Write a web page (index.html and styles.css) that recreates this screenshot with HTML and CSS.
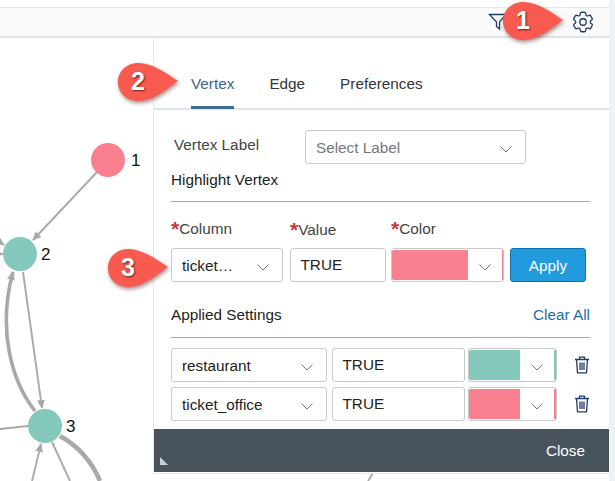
FILE: index.html
```html
<!DOCTYPE html>
<html lang="en">
<head>
    <meta charset="UTF-8">
    <title>Graph Settings</title>
    <link rel="stylesheet" href="styles.css">
</head>
<body>
    <svg class="graph" width="615" height="481" viewBox="0 0 615 481">
        <defs>
            <marker id="arrow" markerWidth="9" markerHeight="9" refX="8" refY="4.5" orient="auto" markerUnits="userSpaceOnUse">
                <path d="M0 0.5 L9 4.5 L0 8.5 Z" fill="#a9a9a9"/>
            </marker>
        </defs>
        <g fill="none" stroke="#a9a9a9" stroke-width="1.9">
            <path d="M97 172 L33 240" marker-end="url(#arrow)"/>
            <path d="M-6 238 L4 245" marker-end="url(#arrow)"/>
            <path d="M-8 254 L3 254" marker-end="url(#arrow)"/>
            <path d="M23 272 L42 408" marker-end="url(#arrow)"/>
            <path d="M0 429 L28 426"/>
            <path d="M32 481 L41 444" marker-end="url(#arrow)"/>
            <path d="M52 442 L70 481"/>
            <path d="M373 473 L368 481"/>
            <path d="M35 411 C12 382 -3 330 13 272" stroke-width="3.6" marker-end="url(#arrow)"/>
            <path d="M60 436 C78 446 92 462 100 481" stroke-width="4.6"/>
        </g>
        <circle cx="108" cy="160" r="17" fill="#f9808f"/>
        <circle cx="20" cy="254" r="17" fill="#83c8ba"/>
        <circle cx="45" cy="426" r="17" fill="#83c8ba"/>
        <text x="131" y="166" class="node-label">1</text>
        <text x="41" y="260" class="node-label">2</text>
        <text x="66" y="432" class="node-label">3</text>
    </svg>

    <header class="toolbar">
        <svg class="filter-icon" width="20" height="20" viewBox="0 0 20 20" fill="none" stroke="#223a66" stroke-width="1.3">
            <path d="M1.5 2.5 H18 L11.5 10 V17 L8.5 14.5 V10 Z"/>
        </svg>
        <svg class="gear-icon" width="26" height="26" viewBox="0 0 24 24" fill="none" stroke="#223a66" stroke-width="1.2">
            <path d="M9.594 3.94c.09-.542.56-.94 1.11-.94h2.593c.55 0 1.02.398 1.11.94l.213 1.281c.063.374.313.686.645.87.074.04.147.083.22.127.325.196.72.257 1.075.124l1.217-.456a1.125 1.125 0 0 1 1.37.49l1.296 2.247a1.125 1.125 0 0 1-.26 1.431l-1.003.827c-.293.241-.438.613-.43.992a7.723 7.723 0 0 1 0 .255c-.008.378.137.75.43.991l1.004.827c.424.35.534.955.26 1.43l-1.298 2.247a1.125 1.125 0 0 1-1.369.491l-1.217-.456c-.355-.133-.75-.072-1.076.124a6.47 6.47 0 0 1-.22.128c-.331.183-.581.495-.644.869l-.213 1.281c-.09.543-.56.94-1.11.94h-2.594c-.55 0-1.019-.398-1.11-.94l-.213-1.281c-.062-.374-.312-.686-.644-.87a6.52 6.52 0 0 1-.22-.127c-.325-.196-.72-.257-1.076-.124l-1.217.456a1.125 1.125 0 0 1-1.369-.49l-1.297-2.247a1.125 1.125 0 0 1 .26-1.431l1.004-.827c.292-.24.437-.613.43-.991a6.932 6.932 0 0 1 0-.255c.007-.38-.138-.751-.43-.992l-1.004-.827a1.125 1.125 0 0 1-.26-1.43l1.297-2.247a1.125 1.125 0 0 1 1.37-.491l1.216.456c.356.133.751.072 1.076-.124.072-.044.146-.086.22-.128.332-.183.582-.495.644-.869l.214-1.28Z"/>
            <circle cx="12" cy="12" r="3"/>
        </svg>
    </header>

    <section class="panel">
        <nav class="tabs">
            <a class="tab active">Vertex</a>
            <a class="tab">Edge</a>
            <a class="tab">Preferences</a>
        </nav>

        <div class="panel-body">
            <div class="label-row">
                <span class="muted-label">Vertex Label</span>
                <div class="select select-label">
                    <span class="placeholder">Select Label</span>
                    <svg class="chevron" width="12" height="7" viewBox="0 0 12 7"><path d="M0.5 0.5 L6 6 L11.5 0.5"/></svg>
                </div>
            </div>

            <div class="section-title">Highlight Vertex</div>
            <hr class="rule">

            <div class="field-labels">
                <label class="w-column"><b>*</b>Column</label>
                <label class="w-value value-label"><b>*</b>Value</label>
                <label class="w-color"><b>*</b>Color</label>
            </div>
            <div class="field-row">
                <div class="select w-column">
                    <span>ticket…</span>
                    <svg class="chevron" width="12" height="7" viewBox="0 0 12 7"><path d="M0.5 0.5 L6 6 L11.5 0.5"/></svg>
                </div>
                <div class="input w-value">TRUE</div>
                <div class="color-select w-color pink">
                    <span class="swatch"></span>
                    <svg class="chevron" width="12" height="7" viewBox="0 0 12 7"><path d="M0.5 0.5 L6 6 L11.5 0.5"/></svg>
                </div>
                <button class="apply">Apply</button>
            </div>

            <div class="applied-head">
                <span class="section-title">Applied Settings</span>
                <a class="clear-all">Clear All</a>
            </div>
            <hr class="rule rule-applied">

            <div class="applied-row">
                <div class="select w-name">
                    <span>restaurant</span>
                    <svg class="chevron" width="12" height="7" viewBox="0 0 12 7"><path d="M0.5 0.5 L6 6 L11.5 0.5"/></svg>
                </div>
                <div class="input w-val2">TRUE</div>
                <div class="color-select w-col2 teal">
                    <span class="swatch"></span>
                    <svg class="chevron" width="12" height="7" viewBox="0 0 12 7"><path d="M0.5 0.5 L6 6 L11.5 0.5"/></svg>
                </div>
                <svg class="trash" width="16" height="18" viewBox="0 0 16 18" fill="none" stroke="#223a66" stroke-width="1.3">
                    <path d="M1 3.5 H15 M5.5 3 V1.2 H10.5 V3 M2.5 3.5 L3.5 16.8 H12.5 L13.5 3.5 M6 6.5 V14 M8 6.5 V14 M10 6.5 V14"/>
                </svg>
            </div>
            <div class="applied-row">
                <div class="select w-name">
                    <span>ticket_office</span>
                    <svg class="chevron" width="12" height="7" viewBox="0 0 12 7"><path d="M0.5 0.5 L6 6 L11.5 0.5"/></svg>
                </div>
                <div class="input w-val2">TRUE</div>
                <div class="color-select w-col2 pink">
                    <span class="swatch"></span>
                    <svg class="chevron" width="12" height="7" viewBox="0 0 12 7"><path d="M0.5 0.5 L6 6 L11.5 0.5"/></svg>
                </div>
                <svg class="trash" width="16" height="18" viewBox="0 0 16 18" fill="none" stroke="#223a66" stroke-width="1.3">
                    <path d="M1 3.5 H15 M5.5 3 V1.2 H10.5 V3 M2.5 3.5 L3.5 16.8 H12.5 L13.5 3.5 M6 6.5 V14 M8 6.5 V14 M10 6.5 V14"/>
                </svg>
            </div>
        </div>

        <footer class="panel-footer">
            <svg class="grip" width="10" height="10" viewBox="0 0 10 10"><path d="M1 1 L9 9 H1 Z" fill="#c9ced3"/></svg>
            <span class="close">Close</span>
        </footer>
    </section>

    <div class="callout callout-1">
        <svg width="66" height="46" viewBox="0 0 66 46"><path d="M22 2 C36 2 50 12 62 20 C50 28 38 40 22 40 C10 40 2 31 2 21 C2 11 10 2 22 2 Z"/></svg>
        <span>1</span>
    </div>
    <div class="callout callout-2">
        <svg width="66" height="46" viewBox="0 0 66 46"><path d="M22 2 C36 2 50 12 62 20 C50 28 38 40 22 40 C10 40 2 31 2 21 C2 11 10 2 22 2 Z"/></svg>
        <span>2</span>
    </div>
    <div class="callout callout-3">
        <svg width="66" height="46" viewBox="0 0 66 46"><path d="M22 2 C36 2 50 12 62 20 C50 28 38 40 22 40 C10 40 2 31 2 21 C2 11 10 2 22 2 Z"/></svg>
        <span>3</span>
    </div>
</body>
</html>
```

FILE: styles.css
```css
* {
    box-sizing: border-box;
}
body {
    margin: 0;
    width: 615px;
    height: 481px;
    overflow: hidden;
    position: relative;
    background-color: #ffffff;
    font-family: "Liberation Sans", Arial, sans-serif;
    font-size: 15.3px;
    color: #32363a;
    padding-top: 7px;
    border-right: 6px solid #eef1f6;
}

/* free canvas behind everything */
.graph {
    position: absolute;
    left: 0;
    top: 0;
}
.node-label {
    font-family: "Liberation Sans", Arial, sans-serif;
    font-size: 17px;
    fill: #111111;
}

.toolbar {
    position: relative;
    height: 31px;
    background-color: #fafafa;
    border-top: 1px solid #e4e9f0;
    border-bottom: 2px solid #dde3ea;
    display: flex;
    align-items: center;
    justify-content: flex-end;
    gap: 62px;
    padding-right: 13px;
}

.panel {
    position: relative;
    margin-left: 153px;
    height: 436px;
    background-color: #ffffff;
    border-left: 1px solid #e4e9f4;
    border-bottom: 1px solid #e4e9f0;
    display: flex;
    flex-direction: column;
}
.tabs {
    height: 72px;
    display: flex;
    gap: 35px;
    padding-left: 37px;
    border-bottom: 2px solid #d9e6f2;
}
.tab {
    height: 71px;
    padding-top: 37px;
    color: #32363a;
}
.tab.active {
    color: #3f6388;
    border-bottom: 3px solid #3f6a94;
}

.panel-body {
    flex: 1;
    padding: 20px 19px 0 17px;
}
.label-row {
    display: flex;
    align-items: center;
    height: 34px;
}
.muted-label {
    width: 134px;
    padding-left: 3px;
    padding-bottom: 4px;
    color: #444444;
}
.select, .input, .color-select {
    height: 34px;
    background-color: #ffffff;
    border: 1px solid #c9c9c9;
    border-radius: 3px;
    display: flex;
    align-items: center;
    color: #222222;
}
.select {
    justify-content: space-between;
    padding: 0 13px 0 10px;
}
.select span {
    padding-top: 1px;
}
.select-label {
    width: 221px;
}
.placeholder {
    color: #74777a;
}
.chevron {
    fill: none;
    stroke: #6a7a8a;
    stroke-width: 1;
    flex: none;
    margin-top: 4px;
}
.section-title {
    color: #222222;
}
.panel-body > .section-title {
    margin-top: 7px;
    line-height: 17px;
}
.rule {
    margin: 13px 0 0;
    border: none;
    border-top: 1px solid #a8a8a8;
}

.field-labels {
    display: flex;
    gap: 5px;
    margin-top: 18px;
    height: 28px;
    color: #444444;
}
.field-labels b {
    color: #c8353c;
    font-size: 21px;
    font-weight: bold;
    line-height: 0;
    vertical-align: -2px;
}
.value-label {
    padding-top: 1px;
}
.field-row {
    display: flex;
    gap: 5px;
}
.w-column {
    width: 112px;
    margin-right: 2px;
}
.w-value {
    width: 96px;
}
.input {
    padding-left: 9.5px;
}
.color-select {
    padding: 1px 1px 1px 0;
    justify-content: flex-start;
    position: relative;
}
.w-color {
    width: 113px;
}
.swatch {
    display: block;
    height: 100%;
    border-radius: 2px 0 0 2px;
}
.w-color .swatch {
    width: 76px;
}
.w-col2 .swatch {
    width: 51px;
}
.color-select .chevron {
    margin-left: 11px;
}
/* the tiny slice of colour on the far right of the picker */
.color-select::after {
    content: "";
    position: absolute;
    right: 0;
    top: 1px;
    bottom: 1px;
    width: 2px;
}
.w-color::after {
    width: 1px;
}
.pink .swatch, .pink::after {
    background-color: #f9808f;
}
.teal .swatch, .teal::after {
    background-color: #83c8ba;
}
.apply {
    width: 76px;
    height: 34px;
    margin-left: 1px;
    padding-top: 3px;
    background-color: #219ade;
    color: #ffffff;
    border: 1px solid #1273aa;
    border-radius: 3px;
    font-family: inherit;
    font-size: 15.3px;
}

.applied-head {
    display: flex;
    justify-content: space-between;
    align-items: center;
    margin-top: 24px;
    height: 18px;
}
.clear-all {
    color: #1a6ea8;
}
.rule-applied {
    margin-top: 13px;
    margin-bottom: 10px;
}
.applied-row {
    display: flex;
    align-items: center;
    height: 34px;
    margin-bottom: 5px;
}
.w-name {
    width: 156px;
    margin-right: 5px;
}
.w-val2 {
    width: 133px;
    margin-right: 3px;
}
.w-col2 {
    width: 89px;
    margin-right: 17px;
}
.trash {
    flex: none;
}

.panel-footer {
    height: 43px;
    flex: none;
    margin-bottom: 1px;
    background-color: #49535c;
    display: flex;
    align-items: flex-end;
    justify-content: space-between;
    padding: 0 24px 12px 5px;
    color: #ffffff;
}
.grip {
    margin-bottom: -6px;
}

/* red numbered markers sitting over the page */
.callout {
    position: absolute;
    width: 66px;
    height: 46px;
}
.callout svg {
    display: block;
    fill: #f95a50;
    filter: drop-shadow(1px 2px 2px rgba(90, 30, 30, 0.55));
}
.callout span {
    position: absolute;
    left: 0;
    top: 6px;
    width: 44px;
    text-align: center;
    font-size: 25px;
    line-height: 29px;
    font-weight: bold;
    color: #ffffff;
    text-shadow: 1px 1px 2px rgba(60, 0, 0, 0.7);
}
.callout-1 {
    left: 501px;
    top: 0;
}
.callout-2 {
    left: 116px;
    top: 61px;
}
.callout-3 {
    left: 106px;
    top: 247px;
}
```
